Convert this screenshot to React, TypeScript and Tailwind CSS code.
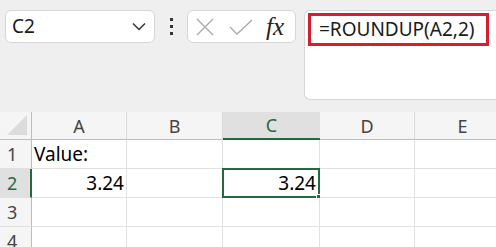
import React from "react";

const font = { fontFamily: '"Noto Sans", "Open Sans", sans-serif' };

const cols = ["A", "B", "C", "D", "E"];
const widths = ["w-[95px]", "w-[96px]", "w-[97px]", "w-[95px]", "w-[96px]"];

function Cell({ row, col }: { row: number; col: number }) {
  let content: React.ReactNode = null;
  if (row === 1 && col === 0) content = <span className="pl-[2px]">Value:</span>;
  if (row === 2 && col === 0) content = <span className="ml-auto pr-[2px]">3.24</span>;
  if (row === 2 && col === 2) content = <span className="ml-auto pr-[3px]">3.24</span>;
  const selected = row === 2 && col === 2;
  return (
    <div
      className={`relative flex h-[29px] shrink-0 items-center border-r border-b border-[#e1e1e1] bg-white text-[19px] leading-none text-black ${widths[col]}`}
    >
      {content}
      {selected && (
        <>
          <div className="absolute -top-[1px] -left-[1px] -right-[1px] -bottom-[1px] border-2 border-[#1f6b40]" />
          <div className="absolute -right-[3px] -bottom-[3px] h-[6px] w-[6px] border border-white bg-[#1f6b40]" />
        </>
      )}
    </div>
  );
}

export default function App() {
  return (
    <div className="h-[247px] w-[496px] overflow-hidden bg-[#efefef]" style={font}>
      {/* ============ FORMULA BAR ============ */}
      <div className="flex h-[112px] items-start pt-[10px] pl-[5px]">
        <div className="flex h-[33px] w-[150px] items-center justify-between rounded-md border border-[#d6d6d6] bg-white pl-[6px] pr-[8px]">
          <span className="text-[19px] leading-none text-[#1a1a1a]">C2</span>
          <svg width="14" height="9" viewBox="0 0 14 9">
            <path d="M1 1.5 L7 7.5 L13 1.5" fill="none" stroke="#333" strokeWidth="1.5" />
          </svg>
        </div>
        <div className="flex h-[33px] w-[32px] flex-col items-center justify-center gap-[4px]">
          <span className="h-[3px] w-[3px] bg-[#333]" />
          <span className="h-[3px] w-[3px] bg-[#333]" />
          <span className="h-[3px] w-[3px] bg-[#333]" />
        </div>
        <div className="flex h-[33px] w-[109px] items-center rounded-md border border-[#d6d6d6] bg-white pl-[8px]">
          <svg width="18" height="18" viewBox="0 0 18 18">
            <path d="M1 1 L17 17 M17 1 L1 17" stroke="#a8a8a8" strokeWidth="1.3" />
          </svg>
          <svg width="24" height="16" viewBox="0 0 24 16" className="ml-[15px]">
            <path d="M1 8 L8 15 L23 1" fill="none" stroke="#a8a8a8" strokeWidth="1.3" />
          </svg>
          <span
            className="ml-[13px] text-[25px] italic leading-none text-[#222]"
            style={{ fontFamily: '"Liberation Serif", "DejaVu Serif", serif' }}
          >
            fx
          </span>
        </div>
        <div className="ml-[8px] h-[90px] flex-1 rounded-l-md border border-r-0 border-[#d6d6d6] bg-white pt-[2px] pl-[3px]">
          <div className="flex h-[33px] w-[181px] items-center border-[3px] border-[#d3202a] pl-[8px] text-[19px] leading-none text-[#1a1a1a]">
            =ROUNDUP(A2,2)
          </div>
        </div>
      </div>

      {/* ============ GRID ============ */}
      <div className="flex flex-col">
        {/* header row */}
        <div className="flex h-[28px]">
          <div className="relative h-[28px] w-[32px] shrink-0 border-r border-b border-[#bdbdbd] bg-[#f5f5f5]">
            <svg width="20" height="20" viewBox="0 0 20 20" className="absolute right-[4px] bottom-[4px]">
              <path d="M20 0 L20 20 L0 20 Z" fill="#dcdcdc" />
            </svg>
          </div>
          {cols.map((c, i) => (
            <div
              key={c}
              className={`flex h-[28px] shrink-0 items-center justify-center text-[18px] leading-none ${widths[i]} ${
                i === 2
                  ? "border-b-2 border-[#1f6b40] bg-[#e0e0e0] text-[#1f6b40]"
                  : "border-r border-b border-[#bdbdbd] border-r-[#dadada] bg-[#f5f5f5] text-[#444]"
              }`}
            >
              {c}
            </div>
          ))}
        </div>
        {[1, 2, 3, 4].map((r) => (
          <div key={r} className="flex">
            <div
              className={`flex h-[29px] w-[32px] shrink-0 items-center border-b border-[#e1e1e1] pl-[7px] text-[18px] leading-none ${
                r === 2
                  ? "border-r-2 border-r-[#1f6b40] bg-[#e0e0e0] text-[#1f6b40]"
                  : "border-r border-r-[#bdbdbd] bg-[#f5f5f5] text-[#444]"
              }`}
            >
              {r}
            </div>
            {cols.map((c, i) => (
              <Cell key={c} row={r} col={i} />
            ))}
          </div>
        ))}
      </div>
    </div>
  );
}
